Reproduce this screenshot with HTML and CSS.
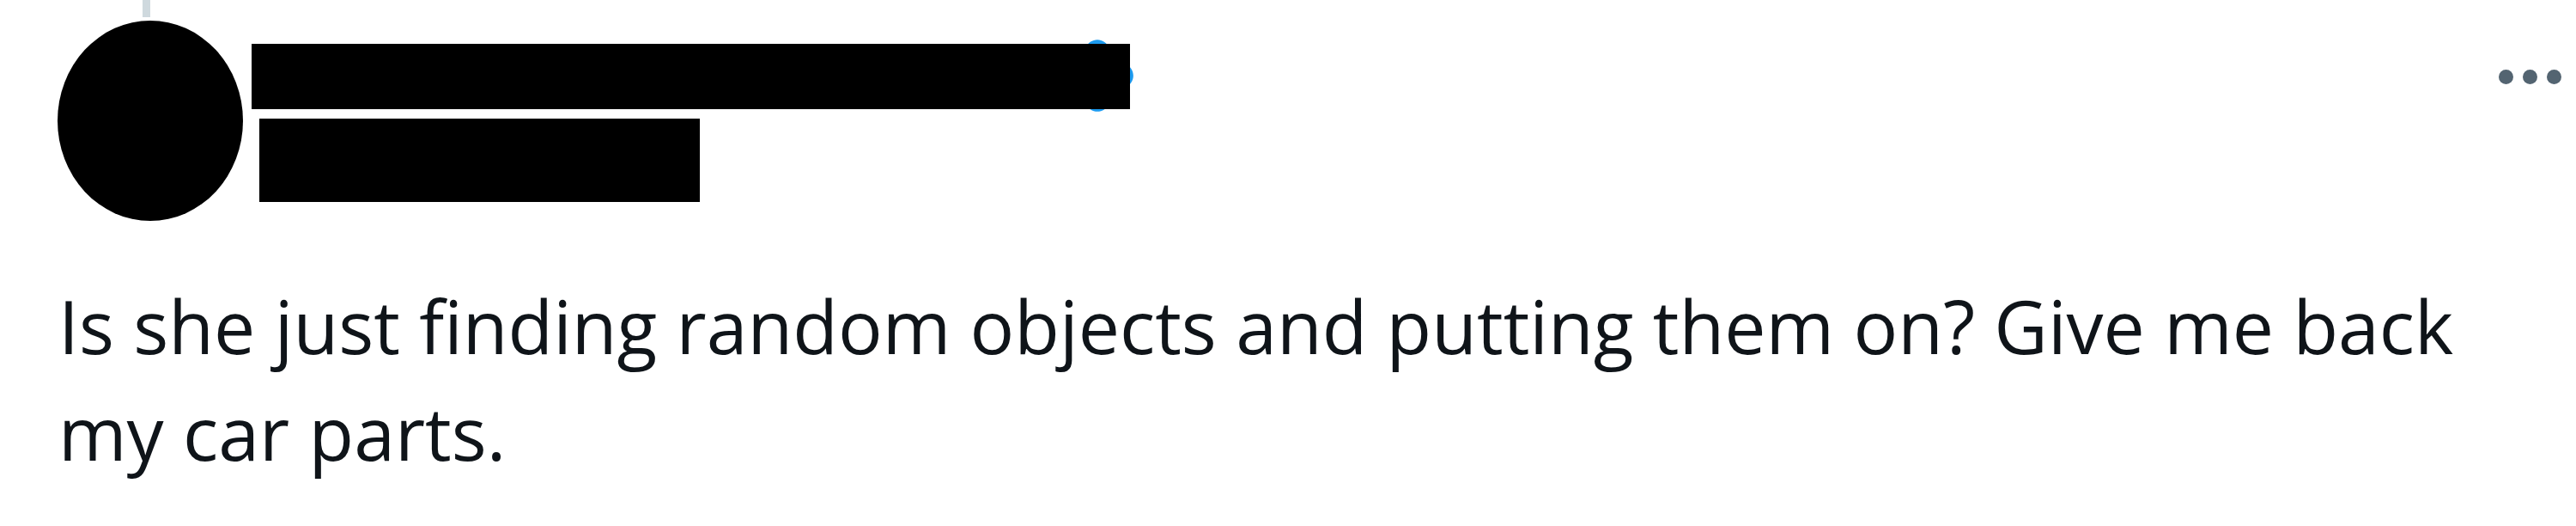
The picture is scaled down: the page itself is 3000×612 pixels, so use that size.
FILE: index.html
```html
<!DOCTYPE html>
<html>
<head>
<meta charset="utf-8">
<link rel="stylesheet" href="styles.css">
</head>
<body>
<div class="tweet">
  <div class="thread-line"></div>
  <div class="header">
    <div class="avatar"></div>
    <div class="names">
      <div class="name-row">
        <svg class="badge" viewBox="0 0 24 24" aria-hidden="true"><path d="M22.25 12c0-1.43-.88-2.67-2.19-3.34.46-1.39.2-2.9-.81-3.91s-2.52-1.27-3.91-.81c-.66-1.31-1.91-2.19-3.34-2.19s-2.67.88-3.33 2.19c-1.4-.46-2.91-.2-3.92.81s-1.26 2.52-.8 3.91c-1.31.67-2.2 1.91-2.2 3.34s.89 2.67 2.2 3.34c-.46 1.39-.21 2.9.8 3.91s2.52 1.26 3.91.81c.67 1.31 1.91 2.19 3.34 2.19s2.68-.88 3.34-2.19c1.39.45 2.9.2 3.91-.81s1.27-2.52.81-3.91c1.31-.67 2.19-1.91 2.19-3.34zm-11.71 4.2L6.8 12.46l1.41-1.42 2.26 2.26 4.8-5.23 1.47 1.36-6.2 6.76z"/></svg>
        <span class="bar bar-name"></span>
      </div>
      <span class="bar bar-handle"></span>
    </div>
    <div class="more">
      <span class="dot"></span><span class="dot"></span><span class="dot"></span>
    </div>
  </div>
  <p class="text">Is she just finding random objects and putting them on? Give me back my car parts.</p>
</div>
</body>
</html>
```
FILE: styles.css
```css
html, body { margin: 0; padding: 0; background: #fff; }
.tweet { width: 3000px; height: 612px; overflow: hidden; }
.thread-line { margin-left: 166px; width: 9px; height: 20px; background: #cfd9de; }
.header { display: flex; align-items: flex-start; margin-top: 4px; padding-left: 67px; }
.avatar { width: 216px; height: 233px; border-radius: 50%; background: #000; flex: none; }
.names { display: flex; flex-direction: column; margin-left: 10px; padding-top: 27px; }
.name-row { position: relative; }
.bar { display: block; background: #000; }
.bar-name { width: 1023px; height: 76px; position: relative; }
.bar-handle { width: 513px; height: 97px; margin-top: 11px; margin-left: 9px; }
.badge { position: absolute; left: 936px; top: -12px; width: 98px; height: 98px; fill: #1d9bf0; }
.more { margin-left: auto; margin-right: 17px; margin-top: 57px; display: flex; gap: 11px; }
.dot { width: 17px; height: 17px; border-radius: 50%; background: #536471; }
.text { margin: 60px 0 0 68px; font-family: "Open Sans", sans-serif; font-size: 86px; line-height: 124px; color: #0f1419; width: 2900px; }
```
